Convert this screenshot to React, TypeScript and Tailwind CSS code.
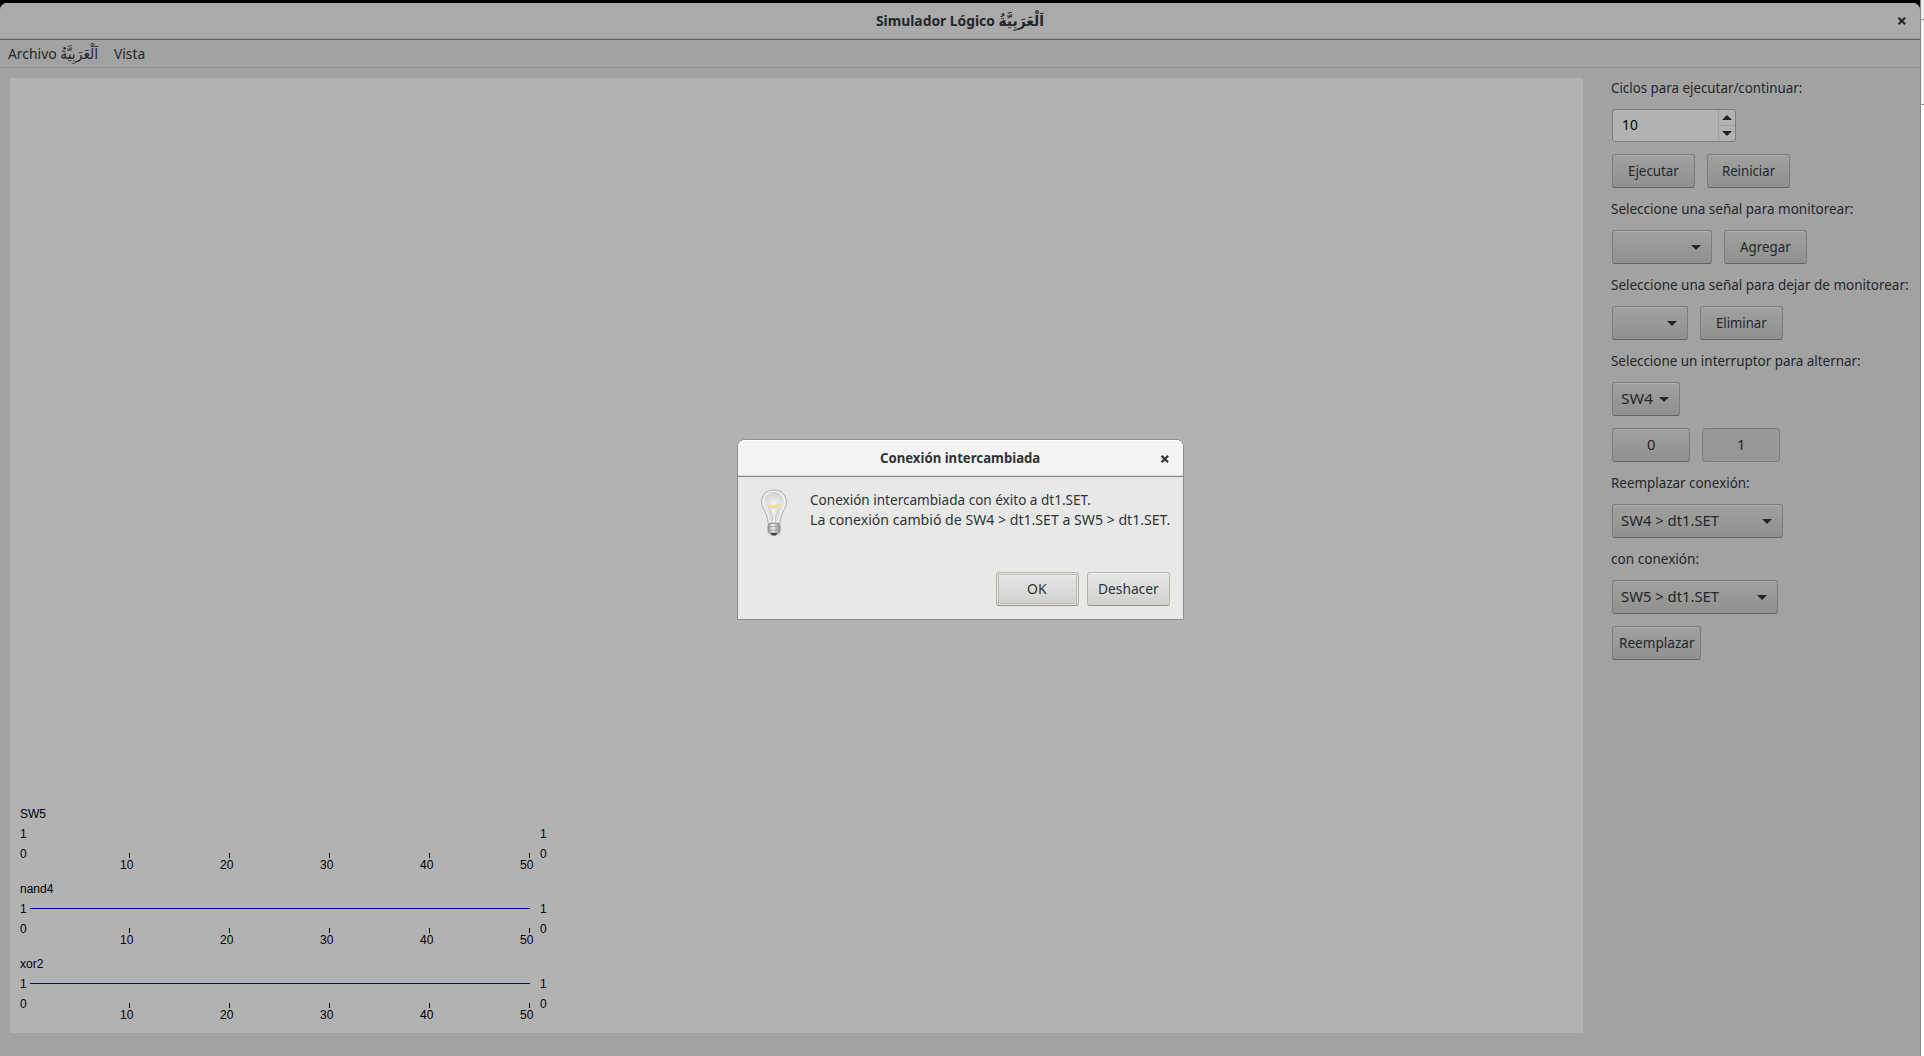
import React from "react";

const BUTTON =
  "flex h-[34px] items-center justify-center rounded-[3px] border border-[#7c7c7a] border-b-[#626260] bg-gradient-to-b from-[#a1a1a0] to-[#90908e] text-[#22272a] shadow-[inset_0_1px_0_#adadac]";

function Caret({ up = false }: { up?: boolean }) {
  return (
    <svg width="10" height="5" viewBox="0 0 10 5" className="shrink-0">
      <path d={up ? "M0 5 L5 0 L10 5Z" : "M0 0 L5 5 L10 0Z"} fill="#202629" />
    </svg>
  );
}

function Cross({ color }: { color: string }) {
  return (
    <svg width="10" height="10" viewBox="0 0 10 10">
      <path d="M1.5 1.7 L8.1 8.3 M8.1 1.7 L1.5 8.3" stroke={color} strokeWidth="2.1" />
    </svg>
  );
}

function Fit({ w, children }: { w: number; children: React.ReactNode }) {
  const ref = React.useRef<HTMLSpanElement>(null);
  const [scale, setScale] = React.useState(1);
  React.useLayoutEffect(() => {
    if (ref.current) setScale(w / ref.current.offsetWidth);
  }, [w]);
  return (
    <span className="inline-flex justify-start whitespace-nowrap" style={{ width: w }}>
      <span ref={ref} className="inline-block shrink-0 origin-left -translate-y-px" style={{ transform: `scaleX(${scale})` }}>
        {children}
      </span>
    </span>
  );
}

function Label({ w, children }: { w: number; children: string }) {
  return (
    <div className="-ml-px flex h-[18px] items-center">
      <Fit w={w}>{children}</Fit>
    </div>
  );
}

function Combo({ className, w = 0, text = "" }: { className: string; w?: number; text?: string }) {
  return (
    <button className={`${BUTTON} ${className}`}>
      <span className="flex grow items-center justify-between pl-2 pr-[10px]">
        {text ? <Fit w={w}>{text}</Fit> : <span />}
        <Caret />
      </span>
    </button>
  );
}

function Bulb() {
  return (
    <svg width="28" height="48" viewBox="0 0 28 48">
      <defs>
        <radialGradient id="glass" cx="0.5" cy="0.3" r="0.7">
          <stop offset="0" stopColor="#d6d6d4" />
          <stop offset="0.5" stopColor="#e6e6e4" />
          <stop offset="1" stopColor="#dadad8" />
        </radialGradient>
        <radialGradient id="shine" cx="0.5" cy="0.8" r="0.8">
          <stop offset="0" stopColor="#f2f2f0" />
          <stop offset="1" stopColor="#cfcfcd" />
        </radialGradient>
        <radialGradient id="shade">
          <stop offset="0" stopColor="#8a8a88" />
          <stop offset="1" stopColor="#e8e8e7" stopOpacity="0" />
        </radialGradient>
        <linearGradient id="cap">
          <stop offset="0" stopColor="#8f8f8d" />
          <stop offset="0.4" stopColor="#f4f4f2" />
          <stop offset="1" stopColor="#8c8c8a" />
        </linearGradient>
      </defs>
      <ellipse cx="14" cy="45" rx="9" ry="2.6" fill="url(#shade)" />
      <path d="M14 1C6.500 1 1.500 6 1.500 13C1.500 20 7.500 23 8 34H20C20.500 23 26.500 20 26.500 13C26.500 6 21.500 1 14 1Z" fill="url(#glass)" stroke="#b0b0ae" />
      <path d="M14 2.500C7.500 2.500 3.200 7 3.200 13C3.200 19 8.500 23 9.500 33H18.500C19.500 23 24.800 19 24.800 13C24.800 7 20.500 2.500 14 2.500Z" fill="none" stroke="#f5f5f3" />
      <ellipse cx="14" cy="10.500" rx="8.500" ry="7.500" fill="url(#shine)" />
      <path d="M8.500 18L12.500 28V34M19.500 18L15.500 28V34" fill="none" stroke="#c2c2c0" strokeWidth="0.9" />
      <path d="M14 20V33" stroke="#f6f6f4" strokeWidth="1.500" />
      <path d="M7.500 15.500Q13.500 19.800 19.500 15.500" fill="none" stroke="#f0e272" strokeWidth="1.600" />
      <rect x="8" y="34.500" width="12" height="9.500" rx="2" fill="url(#cap)" stroke="#8e8e8c" strokeWidth="0.900" />
      <path d="M8 38L20 37M8 41.500L20 40.500" stroke="#9a9a98" strokeWidth="0.900" />
      <path d="M10.500 44H17.500L16 46.500H12Z" fill="#444644" />
    </svg>
  );
}

function Trace({ y, name, high }: { y: number; name: string; high: boolean }) {
  return (
    <g transform={`translate(0 ${y})`}>
      <text x="10" y="0">{name}</text>
      <text x="10" y="20">1</text>
      <text x="10" y="40">0</text>
      <text x="530" y="20">1</text>
      <text x="530" y="40">0</text>
      {high && <rect x="20" y="15" width="500" height="1" fill="#0000b2" />}
      {[10, 20, 30, 40, 50].map((n) => (
        <g key={n}>
          <rect x={19 + n * 10} y="35" width="1" height="5" />
          <text x={10 + n * 10} y="51">{n}</text>
        </g>
      ))}
    </g>
  );
}

function Dialog() {
  const button =
    "flex h-[34px] w-[83px] items-center justify-center rounded-[3px] border border-[#b3b3b0] border-b-[#91918e] bg-gradient-to-b from-[#e8e8e7] to-[#d0d0ce]";
  return (
    <div className="absolute left-[737px] top-[439px] flex h-[181px] w-[447px] flex-col rounded-t-[8px] border border-[#8c8c8a] bg-[#e8e8e7] text-[#2e3436]">
      <div className="flex h-[37px] items-center rounded-t-[7px] border-b border-[#868684] bg-[#f4f4f4] shadow-[inset_0_-1px_0_#dcdcda,inset_0_1px_0_#ffffff]">
        <span className="w-[142px]" />
        <span className="grow font-bold"><Fit w={160}>Conexión intercambiada</Fit></span>
        <span className="pr-[13px] pt-px"><Cross color="#2e3436" /></span>
      </div>
      <div className="flex pl-[22px] pt-3">
        <Bulb />
        <div className="ml-[22px] mt-px flex flex-col leading-5">
          <Fit w={281}>Conexión intercambiada con éxito a dt1.SET.</Fit>
          <Fit w={360}>La conexión cambió de SW4 &gt; dt1.SET a SW5 &gt; dt1.SET.</Fit>
        </div>
      </div>
      <div className="mb-[13px] mr-[13px] mt-auto flex justify-end gap-2">
        <button className={`${button} pr-px shadow-[inset_0_0_0_1px_#e6e6e5,inset_0_0_0_2px_#b9b9b6]`}><Fit w={20}>OK</Fit></button>
        <button className={`${button} shadow-[inset_0_1px_0_#f5f5f5]`}><Fit w={61}>Deshacer</Fit></button>
      </div>
    </div>
  );
}

export default function App() {
  return (
    <div className="relative flex h-[1056px] w-[1924px] overflow-hidden bg-black pt-[3px] font-['Noto_Sans','DejaVu_Sans',sans-serif] text-[14.67px] text-[#22272a]">
      <div className="flex w-[1920px] flex-col rounded-t-[7px] bg-[#a2a2a2]">
        <header className="flex h-[37px] items-center rounded-t-[7px] border-b border-[#5d5d5c] bg-[#aaaaaa] shadow-[inset_0_-1px_0_#9b9b9a]">
          <span className="w-[876px]" />
          <span className="grow font-bold"><Fit w={168}>Simulador Lógico اَلْعَرَبِيَّةُ</Fit></span>
          <span className="pr-[13px]"><Cross color="#202528" /></span>
        </header>
        <nav className="flex h-7 items-center gap-4 border-b border-[#8f8f8f] pl-2">
          <Fit w={90}>Archivo اَلْعَرَبِيَّةُ</Fit>
          <Fit w={31}>Vista</Fit>
        </nav>
        <main className="flex grow">
          <svg width="1573" height="955" className="ml-[10px] mt-[10px] bg-[#b2b2b2] font-['Liberation_Sans',sans-serif] text-[12px]" fill="#000" shapeRendering="crispEdges">
            <Trace y={740} name="SW5" high={false} />
            <Trace y={815} name="nand4" high />
            <Trace y={890} name="xor2" high />
          </svg>
          <aside className="ml-[29px] mt-[11px] flex flex-col gap-3">
            <Label w={191}>Ciclos para ejecutar/continuar:</Label>
            <div className="flex h-[33px] w-[124px] rounded-[3px] border border-[#7c7c7a] bg-[#b2b2b2]">
              <span className="grow pl-[9px] leading-[31px] text-[#050505]"><Fit w={16}>10</Fit></span>
              <span className="flex w-[17px] flex-col border-l border-[#9f9f9f]">
                <span className="flex h-4 items-center justify-center border-b border-[#9f9f9f]"><Caret up /></span>
                <span className="flex h-[15px] items-center justify-center"><Caret /></span>
              </span>
            </div>
            <div className="flex gap-3">
              <button className={`${BUTTON} w-[83px]`}><Fit w={51}>Ejecutar</Fit></button>
              <button className={`${BUTTON} w-[83px]`}><Fit w={53}>Reiniciar</Fit></button>
            </div>
            <Label w={242}>Seleccione una señal para monitorear:</Label>
            <div className="flex gap-3">
              <Combo className="w-[100px]" />
              <button className={`${BUTTON} w-[83px]`}><Fit w={51}>Agregar</Fit></button>
            </div>
            <Label w={298}>Seleccione una señal para dejar de monitorear:</Label>
            <div className="flex gap-3">
              <Combo className="w-[76px]" />
              <button className={`${BUTTON} w-[83px]`}><Fit w={51}>Eliminar</Fit></button>
            </div>
            <Label w={250}>Seleccione un interruptor para alternar:</Label>
            <Combo className="w-[68px]" text="SW4" w={32} />
            <div className="flex gap-3">
              <button className={`${BUTTON} w-[78px]`}><Fit w={8}>0</Fit></button>
              <button className="flex h-[34px] w-[78px] items-center justify-center rounded-[3px] border border-[#7c7c7a] bg-[#979795]"><Fit w={8}>1</Fit></button>
            </div>
            <Label w={139}>Reemplazar conexión:</Label>
            <Combo className="w-[171px]" text="SW4 > dt1.SET" w={98} />
            <Label w={88}>con conexión:</Label>
            <Combo className="w-[166px]" text="SW5 > dt1.SET" w={98} />
            <button className={`${BUTTON} w-[89px]`}><Fit w={76}>Reemplazar</Fit></button>
          </aside>
        </main>
      </div>
      <div className="-mt-[3px] flex w-1 flex-col border-l border-[#858585] bg-white">
        <div className="h-5 border-b border-[#999999] bg-[#eeeeee]" />
        <div className="h-[85px] border-b border-[#999999] bg-[#f4f4f4]" />
      </div>
      <Dialog />
    </div>
  );
}
